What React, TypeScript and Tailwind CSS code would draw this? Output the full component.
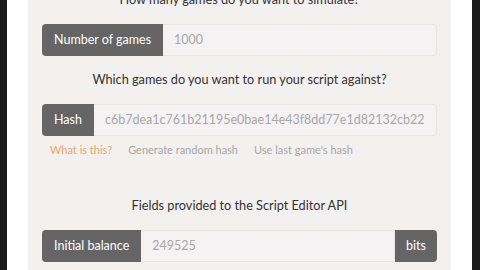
import React from "react";

function InputRow({ label, value, addon }: { label: string; value: string; addon?: string }) {
  return (
    <div className="flex h-[32px] w-full">
      <div className="flex shrink-0 items-center rounded-l-[4px] bg-[#656565] px-[12px] text-[12.5px] text-white">
        {label}
      </div>
      <div className={`flex min-w-0 flex-1 items-center overflow-hidden whitespace-nowrap border border-l-0 border-[#e9e6e6] bg-[#f4f2f2] px-[11px] text-[12.5px] text-[#a9a7a7] ${addon ? "" : "rounded-r-[4px]"}`}>
        {value}
      </div>
      {addon && (
        <div className="flex shrink-0 items-center rounded-r-[4px] bg-[#656565] px-[11px] text-[12.5px] text-white">
          {addon}
        </div>
      )}
    </div>
  );
}

export default function App() {
  return (
    <div className="flex h-[270px] w-[480px] overflow-hidden bg-white" style={{ fontFamily: "Lato, 'Open Sans', sans-serif" }}>
      <div className="w-[7px] bg-[#1b1b1b]" />
      <div className="w-[21px] bg-white" />
      <div className="flex w-[423px] flex-col items-center bg-[#f3f0f0] px-[14px]">
        <p className="mt-[-11px] h-[20px] leading-[20px] text-[12.7px] text-[#333]">How many games do you want to simulate?</p>
        <div className="mt-[15px] w-full">
          <InputRow label="Number of games" value="1000" />
        </div>
        <p className="mt-[13px] h-[20px] leading-[20px] text-[12.7px] text-[#333]">Which games do you want to run your script against?</p>
        <div className="mt-[15px] w-full">
          <InputRow label="Hash" value="c6b7dea1c761b21195e0bae14e43f8dd77e1d82132cb22" />
        </div>
        <div className="mt-[6px] flex h-[16px] w-full items-center gap-[16px] pl-[8px] text-[11px] leading-[16px] text-[#a9a7a7]">
          <span className="text-[#eea466]">What is this?</span>
          <span>Generate random hash</span>
          <span>Use last game's hash</span>
        </div>
        <p className="mt-[37px] h-[20px] leading-[20px] text-[12.7px] text-[#333]">Fields provided to the Script Editor API</p>
        <div className="mt-[15px] w-full">
          <InputRow label="Initial balance" value="249525" addon="bits" />
        </div>
      </div>
      <div className="w-[21px] bg-white" />
      <div className="flex-1 bg-[#1b1b1b]" />
    </div>
  );
}
